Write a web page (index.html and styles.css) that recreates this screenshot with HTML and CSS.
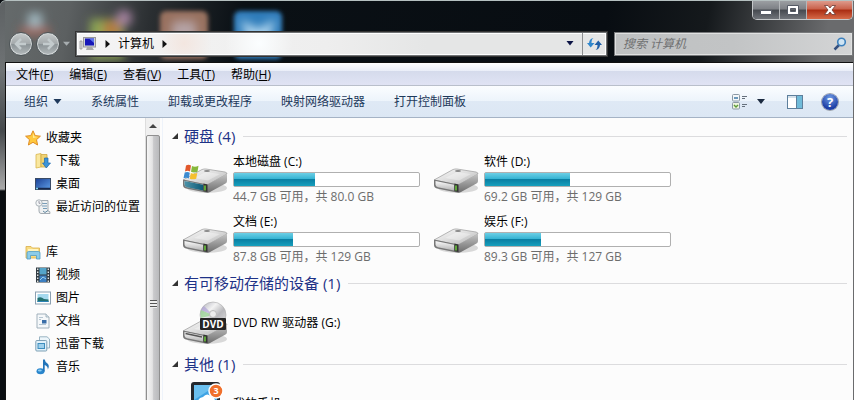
FILE: index.html
```
<!DOCTYPE html>
<html lang="zh-CN">
<head>
  <meta charset="UTF-8">
  <title>计算机</title>
  <link rel="stylesheet" href="styles.css">
</head>
<body>

<svg class="defs" aria-hidden="true">
  <defs>
    <linearGradient id="gTop" x1="0" y1="0" x2="1" y2="1">
      <stop offset="0" stop-color="#fbfbfb"/>
      <stop offset="0.5" stop-color="#dcdcdc"/>
      <stop offset="1" stop-color="#b2b2b2"/>
    </linearGradient>
    <linearGradient id="gSide" x1="0" y1="0" x2="0" y2="1">
      <stop offset="0" stop-color="#c4c4c4"/>
      <stop offset="1" stop-color="#6c6c6c"/>
    </linearGradient>
    <linearGradient id="gFront" x1="0" y1="0" x2="0" y2="1">
      <stop offset="0" stop-color="#fafafa"/>
      <stop offset="1" stop-color="#b4b4b4"/>
    </linearGradient>
    <linearGradient id="gTeal" x1="0" y1="0" x2="1" y2="0">
      <stop offset="0" stop-color="#4d93a8"/>
      <stop offset="1" stop-color="#0e5a76"/>
    </linearGradient>
    <linearGradient id="gBlue" x1="0" y1="0" x2="1" y2="1">
      <stop offset="0" stop-color="#1a3f93"/>
      <stop offset="1" stop-color="#5f9fe8"/>
    </linearGradient>
    <linearGradient id="gDisc" x1="0" y1="0" x2="1" y2="1">
      <stop offset="0" stop-color="#a9a9b4"/>
      <stop offset="0.35" stop-color="#f3f3f3"/>
      <stop offset="0.6" stop-color="#b8b8bc"/>
      <stop offset="1" stop-color="#e8e8e8"/>
    </linearGradient>
    <symbol id="drive" viewBox="0 0 46 28">
      <ellipse cx="25" cy="21" rx="20" ry="5" fill="#000" opacity="0.14"/>
      <path d="M1 13 L20 2.5 Q22 1.8 24 2 L43 5 Q45 5.5 45 7 L26 17.500 Q25 18 23 17.700 Z" fill="url(#gTop)" stroke="#999" stroke-width="0.7"/>
      <path d="M45 7 V14 Q45 15.500 43.500 16.500 L28 25 Q26.500 26 25 25.700 L25 17.800 Z" fill="url(#gSide)"/>
      <path d="M1 13 Q1 12.500 2 12.800 L25 17.500 V25.700 L4 21.500 Q1 20.500 1 18 Z" fill="#777"/>
      <path d="M2.500 14 L21 17.800 V23.500 L5 20.200 Q2.500 19.500 2.500 17.500 Z" fill="url(#gFront)"/>
      <path d="M21.500 16.500 L25.500 17.400 V25 L21.500 24.200 Z" fill="#333"/>
      <path d="M23 18.500 V23.500" stroke="#71d93c" stroke-width="1.400"/>
      <path d="M24 5 L38 7 L26 13.500 L12 11 Z" fill="#fff" opacity="0.35"/>
      <ellipse cx="25" cy="4" rx="3" ry="1" fill="#888"/>
    </symbol>
  </defs>
</svg>

<div class="window">
  <svg class="glass" viewBox="0 0 854 62" preserveAspectRatio="xMinYMin slice" aria-hidden="true">
    <filter id="soft" x="-50%" y="-50%" width="200%" height="200%"><feGaussianBlur stdDeviation="5"/></filter>
    <filter id="softer" x="-50%" y="-50%" width="200%" height="200%"><feGaussianBlur stdDeviation="2"/></filter>
    <g filter="url(#soft)">
      <rect x="28" y="12" width="14" height="14" fill="#9fb6bd"/>
      <rect x="20" y="26" width="30" height="8" fill="#a3675c"/>
      <rect x="90" y="18" width="34" height="40" fill="#8da455"/>
      <rect x="104" y="20" width="16" height="16" fill="#b4793c"/>
      <circle cx="124" cy="17" r="8" fill="#a4829f"/>
    </g>
    <g filter="url(#softer)">
      <rect x="160" y="10" width="48" height="48" rx="6" fill="#98715e"/>
    </g>
    <g filter="url(#softer)">
      <rect x="234" y="10" width="48" height="48" rx="6" fill="#2f7cba"/>
    </g>
    <g filter="url(#soft)">
      <rect x="172" y="20" width="24" height="22" rx="4" fill="#b5a3a5"/>
      <path d="M240 18 L258 28 L276 18 L268 40 H248 Z" fill="#b4d8f0"/>
    </g>
  </svg>

  <div class="caption">
    <button class="cap" aria-label="最小化"><svg width="14" height="12" viewBox="0 0 14 12"><rect x="1.500" y="6.500" width="11" height="4" rx="0.5" fill="#fff" stroke="#555b66"/></svg></button>
    <button class="cap" aria-label="最大化"><svg width="14" height="12" viewBox="0 0 14 12"><path d="M1.500 1.500 H12.500 V10.500 H1.500 Z M4.500 4.500 V7.500 H9.500 V4.500 Z" fill="#fff" fill-rule="evenodd" stroke="#555b66"/></svg></button>
    <button class="cap close" aria-label="关闭"><svg width="14" height="12" viewBox="0 0 14 12"><path d="M1.500 1.500 H5 L7 4 L9 1.500 H12.500 L9 6 L12.500 10.500 H9 L7 8 L5 10.500 H1.500 L5 6 Z" fill="#fff" stroke="#6b3a35" stroke-width="0.8"/></svg></button>
  </div>

  <div class="nav">
    <div class="travel">
      <button class="round" aria-label="后退"><svg width="14" height="14" viewBox="0 0 14 14"><path d="M7 2 L2 7 L7 12 M2.500 7 H12" fill="none" stroke="#c3cbcd" stroke-width="2.500"/></svg></button>
      <button class="round" aria-label="前进"><svg width="14" height="14" viewBox="0 0 14 14"><path d="M7 2 L12 7 L7 12 M11.500 7 H2" fill="none" stroke="#c3cbcd" stroke-width="2.500"/></svg></button>
      <button class="recent" aria-label="最近的页面"><svg width="7" height="5" viewBox="0 0 8 5"><path d="M0 0.500 H8 L4 5 Z" fill="#a7adaf"/></svg></button>
    </div>
    <div class="address">
      <svg width="18" height="16" viewBox="0 0 18 16"><path d="M1 5 H3 V13 H1 Z" fill="#ddd" stroke="#888" stroke-width="0.7"/><rect x="4.500" y="1.500" width="12" height="9.500" fill="#cfd3d8" stroke="#999"/><rect x="6" y="2.500" width="9" height="7" fill="#1717b8"/><path d="M10 2.500 H15 V7 Z" fill="#5c74ea"/><path d="M8 11 H13 L15 14 H7 Z" fill="#aaa"/></svg>
      <button class="crumb" aria-label="展开"><svg width="5" height="8" viewBox="0 0 5 8"><path d="M0.500 0 L5 4 L0.500 8 Z" fill="#111"/></svg></button>
      <button class="crumb">计算机</button>
      <button class="crumb" aria-label="子文件夹"><svg width="5" height="8" viewBox="0 0 5 8"><path d="M0.500 0 L5 4 L0.500 8 Z" fill="#111"/></svg></button>
      <button class="drop" aria-label="以前的位置"><svg width="8" height="5" viewBox="0 0 8 5"><path d="M0.500 0 H7.500 L4 4.500 Z" fill="#0c1445"/></svg></button>
      <button class="refresh" aria-label="刷新"><svg width="15" height="14" viewBox="0 0 15 14"><path d="M6.500 1 Q4.500 2 4.500 6 H7.500 L3.700 10.500 L0 6 H2 Q2.500 1.500 6.500 1 Z" fill="#2f86cc"/><path d="M8.500 13 Q10.500 12 10.500 8 H7.500 L11.300 3.500 L15 8 H13 Q12.500 12.500 8.500 13 Z" fill="#1f5fa8"/></svg></button>
    </div>
    <div class="search">
      <input type="search" placeholder="搜索 计算机" aria-label="搜索 计算机">
      <svg width="14" height="14" viewBox="0 0 14 14"><path d="M1.500 12.500 L6 8" stroke="#35507f" stroke-width="2.500"/><circle cx="8.500" cy="5" r="3.800" fill="#cfe4f3" stroke="#3d80bd" stroke-width="1.600"/></svg>
    </div>
  </div>

  <div class="client">
    <div class="menubar">
      <button>文件(<u>F</u>)</button>
      <button>编辑(<u>E</u>)</button>
      <button>查看(<u>V</u>)</button>
      <button>工具(<u>T</u>)</button>
      <button>帮助(<u>H</u>)</button>
    </div>

    <div class="toolbar">
      <button>组织<svg width="9" height="5" viewBox="0 0 9 5"><path d="M0.500 0 H8.500 L4.500 5 Z" fill="#1e395b"/></svg></button>
      <button>系统属性</button>
      <button>卸载或更改程序</button>
      <button>映射网络驱动器</button>
      <button>打开控制面板</button>
      <div class="views">
        <button aria-label="更改您的视图">
          <svg width="16" height="16" viewBox="0 0 16 16"><rect x="0.500" y="0.500" width="7" height="6.500" rx="1" fill="#f4f7f9" stroke="#8b98a5"/><path d="M2 4 H6" stroke="#3c79a6" stroke-width="1.500"/><rect x="0.500" y="8.500" width="7" height="6.500" rx="1" fill="#eef4df" stroke="#8b98a5"/><path d="M2 11 L4 13 L6 11" stroke="#5d9a37" stroke-width="1.500" fill="none"/><path d="M10 2.500 H15 M10 4.500 H13 M10 10.500 H15 M10 12.500 H13" stroke="#66707c"/></svg>
        </button>
        <button class="more" aria-label="更多选项"><svg width="8" height="5" viewBox="0 0 8 5"><path d="M0 0 H8 L4 5 Z" fill="#1b2a40"/></svg></button>
        <button class="pane" aria-label="显示预览窗格">
          <svg width="16" height="14" viewBox="0 0 16 14"><rect x="0.500" y="0.500" width="15" height="13" fill="#fff" stroke="#5d7f9c"/><path d="M1 2 H15" stroke="#aac3d6"/><rect x="10" y="1" width="5" height="12" fill="#70bbd9"/><path d="M9.500 1 V13" stroke="#5d7f9c"/></svg>
        </button>
        <button class="help" aria-label="帮助">?</button>
      </div>
    </div>

    <div class="content">
      <nav class="sidebar">
        <div class="tree">
          <a class="root" href="#"><svg width="16" height="16" viewBox="0 0 16 16"><path d="M8 0.800 L10.200 5.600 L15.400 6.200 L11.500 9.700 L12.600 15 L8 12.300 L3.400 15 L4.500 9.700 L0.600 6.200 L5.800 5.600 Z" fill="#ffc83d" stroke="#df8d25"/><path d="M8 3 L9.200 6.500 L12.500 7 L8 8 Z" fill="#ffec9a"/></svg>收藏夹</a>
          <a href="#"><svg width="16" height="16" viewBox="0 0 16 16"><path d="M1 1.500 L6 0.500 V14 L1 15 Z" fill="#f9e79f" stroke="#d9b64c" stroke-width="0.8"/><path d="M6 1.500 H12 V14 H6 Z" fill="#f0d374" stroke="#d0aa42" stroke-width="0.8"/><path d="M9.500 5 H13 V10 H15.500 L11.300 15 L7.500 10 H9.500 Z" fill="#3b94d9" stroke="#1e69ae" stroke-width="0.7"/></svg>下载</a>
          <a href="#"><svg width="16" height="16" viewBox="0 0 16 16"><rect x="0.500" y="2.500" width="15" height="11" fill="url(#gBlue)" stroke="#3a4b66"/><path d="M1 12.500 H15" stroke="#17284b" stroke-width="1.500"/><path d="M1 12.500 H3" stroke="#7fd1ea" stroke-width="1.500"/></svg>桌面</a>
          <a href="#"><svg width="16" height="16" viewBox="0 0 16 16"><path d="M4 1.500 H13 V12 Q15.500 12 15 14.500 H6 Q4 14.500 4 12 Z" fill="#eef0f1" stroke="#8e989f" stroke-width="0.8"/><path d="M7 4.500 H12 M7 7 H12 M8 9.500 H12" stroke="#789db8"/><path d="M8 12 L10 13.500 L13 11.500" fill="none" stroke="#648aa2"/><circle cx="4" cy="4" r="3.200" fill="#f4f6f7" stroke="#9aa5ab" stroke-width="0.8"/><path d="M4 2 V4.300 H5.500" fill="none" stroke="#778" stroke-width="0.7"/></svg>最近访问的位置</a>
        </div>
        <div class="tree">
          <a class="root" href="#"><svg width="16" height="16" viewBox="0 0 16 16"><path d="M1 14 V2.500 H6 L7.500 4 H14.500 V14 Z" fill="#f8dc83" stroke="#d9ad48" stroke-width="0.8"/><path d="M3 5 H13 V8 H3 Z" fill="#fff4bf"/><path d="M2 15 V9 Q2 7.500 3.500 7.500 H13.500 Q15 7.500 15 9 V15 H11.500 V11.500 H5.500 V15 Z" fill="#8bcce9" stroke="#4f9cc4" stroke-width="0.8"/></svg>库</a>
          <a href="#"><svg width="16" height="16" viewBox="0 0 16 16"><rect x="1" y="0.500" width="14" height="15" fill="#333c42"/><rect x="4.500" y="1" width="7" height="6.500" fill="#55a5ca"/><rect x="4.500" y="8.500" width="7" height="6.500" fill="#3c7fc1"/><path d="M5 13 L8 10 L11 12" stroke="#9bd3ed" fill="none"/><path d="M2.700 1.500 V15 M13.300 1.500 V15" stroke="#e1e5e7" stroke-width="1.400" stroke-dasharray="1.500 1.500"/></svg>视频</a>
          <a href="#"><svg width="16" height="16" viewBox="0 0 16 16"><rect x="0.500" y="2" width="15" height="12" fill="#fff" stroke="#8ba0b1"/><rect x="2.500" y="4" width="11" height="8" fill="#a6d9ee"/><path d="M2.500 8 Q6 6 9 9 L13.500 9.500 V12 H2.500 Z" fill="#23706f"/><path d="M2.500 11 H13.500 V12 H2.500 Z" fill="#2b83b5"/></svg>图片</a>
          <a href="#"><svg width="16" height="16" viewBox="0 0 16 16"><path d="M2 1 H11 L14 4 V15 H2 Z" fill="#f5f8fa" stroke="#98a9b5" stroke-width="0.9"/><path d="M11 1 V4 H14" fill="#d9e4eb" stroke="#98a9b5" stroke-width="0.8"/><path d="M4 4.500 H8 M4 6.500 H6 M4 11.500 H11" stroke="#b5c6d2"/><rect x="7" y="7" width="4.500" height="3.500" fill="#3b6ea8"/></svg>文档</a>
          <a href="#"><svg width="16" height="16" viewBox="0 0 16 16"><path d="M4.500 0.800 H12 L14.500 3 V12 H4.500 Z" fill="#edf6fb" stroke="#8fabbc" stroke-width="0.9"/><rect x="0.800" y="4.500" width="11" height="10.500" rx="1" fill="#e1f1fa" stroke="#7397ae" stroke-width="0.9"/><rect x="3" y="7.500" width="6.500" height="5" fill="#9ed0ec" stroke="#3e8dbd"/></svg>迅雷下载</a>
          <a href="#"><svg width="16" height="16" viewBox="0 0 16 16"><ellipse cx="5.500" cy="12.300" rx="4" ry="3" fill="#2a86cd"/><path d="M8 12 V0.500 H9.800 Q10 3 12.500 4.500 Q15 6.500 12.800 10.500 Q13 7 9.700 6 V12.500 Z" fill="#2375ba"/><ellipse cx="4.800" cy="11.500" rx="2" ry="1" fill="#8ccdf2"/></svg>音乐</a>
        </div>
      </nav>
      <div class="scrollbar" aria-hidden="true">
        <div class="up"></div>
        <div class="thumb"><span class="grip"></span></div>
      </div>

      <main class="files">
        <section>
          <h2>硬盘 (4)</h2>
          <div class="items">
            <div class="item">
              <div class="icon">
                <svg width="46" height="28"><use href="#drive"/></svg>
                <svg class="over" width="46" height="32" viewBox="0 0 46 32"><path d="M2.500 18 L21 21.800 V27.500 L5 24.200 Q2.500 23.500 2.500 21.500 Z" fill="url(#gTeal)"/><path d="M4 2.500 Q6.500 1 9 2.500 L8 8.500 Q5.500 7 3 8.500 Z" fill="#e2582c"/><path d="M10 3 Q13 4.500 16.500 2.800 L15.500 8.700 Q12 10 9 8.800 Z" fill="#86b83b"/><path d="M2.700 9.500 Q5.500 8.300 7.800 9.800 L6.800 15.500 Q4.300 14 1.500 15.300 Z" fill="#3c8bd0"/><path d="M8.800 10.100 Q11.500 11.500 15.300 10 L14.200 15.700 Q10.500 17 7.800 15.700 Z" fill="#f5c02e"/></svg>
              </div>
              <div class="info">
                <span class="name">本地磁盘 (C:)</span>
                <div class="bar"><div class="fill" style="width: 44%"></div></div>
                <span class="space">44.7 GB 可用，共 80.0 GB</span>
              </div>
            </div>
            <div class="item">
              <div class="icon"><svg width="46" height="28"><use href="#drive"/></svg></div>
              <div class="info">
                <span class="name">软件 (D:)</span>
                <div class="bar"><div class="fill" style="width: 46%"></div></div>
                <span class="space">69.2 GB 可用，共 129 GB</span>
              </div>
            </div>
            <div class="item">
              <div class="icon"><svg width="46" height="28"><use href="#drive"/></svg></div>
              <div class="info">
                <span class="name">文档 (E:)</span>
                <div class="bar"><div class="fill" style="width: 32%"></div></div>
                <span class="space">87.8 GB 可用，共 129 GB</span>
              </div>
            </div>
            <div class="item">
              <div class="icon"><svg width="46" height="28"><use href="#drive"/></svg></div>
              <div class="info">
                <span class="name">娱乐 (F:)</span>
                <div class="bar"><div class="fill" style="width: 30%"></div></div>
                <span class="space">89.3 GB 可用，共 127 GB</span>
              </div>
            </div>
          </div>
        </section>

        <section>
          <h2>有可移动存储的设备 (1)</h2>
          <div class="items">
            <div class="item single">
              <svg width="46" height="44" viewBox="0 0 46 44">
                <use href="#drive" y="17" width="46" height="28"/>
                <path d="M3.500 32.500 L20 36" stroke="#555" stroke-width="1.500"/>
                <circle cx="31" cy="14" r="13" fill="url(#gDisc)" stroke="#aaa" stroke-width="0.6"/>
                <path d="M31 14 L19 9 Q17.500 13 19 17 Z" fill="#8fd08a" opacity="0.7"/>
                <path d="M31 14 L22 5 Q20 6.500 19 9 Z" fill="#a89ad6" opacity="0.6"/>
                <circle cx="31" cy="13" r="3.500" fill="#eee" stroke="#bbb"/>
                <rect x="18" y="17" width="26" height="12" rx="1" fill="#252525"/>
                <text class="dvd" x="31" y="27" text-anchor="middle">DVD</text>
              </svg>
              <span class="name">DVD RW 驱动器 (G:)</span>
            </div>
          </div>
        </section>

        <section>
          <h2>其他 (1)</h2>
          <div class="items">
            <div class="item single">
              <svg width="46" height="44" viewBox="0 0 46 44">
                <rect x="9" y="0" width="29" height="43" rx="3" fill="#24282e"/>
                <rect x="12" y="3" width="23" height="35" fill="#3ea3e4"/>
                <path d="M12 3 H35 L12 18 Z" fill="#6bc0f0"/>
                <path d="M16 22 Q15 16 21 15 Q25 10 30 15 Q34 16 33 22 Z" fill="#fff"/>
                <circle cx="34" cy="9" r="7" fill="#f0702c" stroke="#fff" stroke-width="1.500"/>
                <text class="count" x="34" y="12" text-anchor="middle">3</text>
              </svg>
              <span class="name">我的手机</span>
            </div>
          </div>
        </section>
      </main>
    </div>
  </div>
</div>

</body>
</html>
```
FILE: styles.css
```
* {
  box-sizing: border-box;
}

body {
  margin: 0;
  overflow: hidden;
  background: #0a0d11;
  color: #000;
  font-family: "Open Sans", "Noto Sans CJK SC", sans-serif;
  font-size: 12px;
  line-height: 16px;
}

button {
  padding: 0;
  border: 0;
  background: none;
  color: inherit;
  font: inherit;
  white-space: nowrap;
}

svg {
  display: block;
  flex-shrink: 0;
}

a {
  color: inherit;
  text-decoration: none;
}

.defs {
  position: absolute;
  width: 0;
  height: 0;
}

/* window frame */
.window {
  position: relative;
  display: flex;
  flex-direction: column;
  height: 100vh;
  padding: 0 1px 0 5px;
  border-top: 1px solid #b5c0c0;
  border-radius: 6px 0 0 0;
  background:
    linear-gradient(#5d6163, #6f7375 70px, #45494c 130px, #aaa 188px, #0a0d11 190px) left / 5px 100% no-repeat,
    linear-gradient(100deg, #666b6c, #5c6061 70px, #2b2f32 150px, #0a1015 240px, #080d12 600px, #15191c 700px, #6a6b6d 820px);
}

.glass {
  position: absolute;
  top: 0;
  left: 0;
  width: 100%;
  height: 62px;
}

.caption {
  position: relative;
  display: flex;
  align-self: flex-end;
  height: 19px;
  border: 1px solid #c5c8ca;
  border-top: 0;
  border-radius: 0 0 5px 5px;
  overflow: hidden;
}

.cap {
  display: flex;
  align-items: center;
  justify-content: center;
  width: 27px;
  border-right: 1px solid #b4b7ba;
  background: linear-gradient(#9b9ea2, #7d8085 45%, #45494f 50%, #70747a);
}

.cap.close {
  width: 45px;
  border-right: 0;
  background: linear-gradient(#dd9a8c, #c9604a 45%, #a92c12 50%, #d66a48);
}

.nav {
  position: relative;
  display: flex;
  align-items: center;
  gap: 7px;
  height: 42px;
  padding-top: 5px;
}

.travel {
  display: flex;
  align-items: center;
  gap: 3px;
  width: 64px;
  padding-left: 4px;
}

.round {
  display: flex;
  align-items: center;
  justify-content: center;
  flex-shrink: 0;
  width: 24px;
  height: 24px;
  border: 1px solid #4e5558;
  border-radius: 50%;
  background: linear-gradient(#c7cbcc, #a2a8aa 50%, #8b9396 52%, #b4babc);
  box-shadow: inset 0 0 0 1px #d2d6d7;
}

.address {
  display: flex;
  align-items: center;
  flex: 1;
  gap: 8px;
  height: 24px;
  padding-left: 2px;
  border: 1px solid #6f7274;
  outline: 1px solid #333;
  background:
    radial-gradient(circle at 107px 10px, #f3e6e0, transparent 28px),
    radial-gradient(circle at 182px 10px, #fbfeff, transparent 34px),
    linear-gradient(90deg, #f4f4f4, #eee 250px, #e5e6e6 350px);
  box-shadow: inset 0 0 0 1px #fff;
}

.drop {
  margin-left: auto;
}

.refresh {
  display: flex;
  align-items: center;
  justify-content: center;
  align-self: stretch;
  width: 24px;
  border-left: 1px solid #8c8e90;
}

.search {
  display: flex;
  align-items: center;
  width: 239px;
  height: 24px;
  padding: 0 5px 0 8px;
  border: 1px solid #77797b;
  background: linear-gradient(90deg, #bfc1c2, #c2c4c5 50%, #d4d5d6);
  box-shadow: inset 0 0 0 1px #e0e1e1;
}

.search input {
  flex: 1;
  min-width: 0;
  padding: 0;
  border: 0;
  outline: 0;
  background: none;
  font: inherit;
  font-style: italic;
}

.search input::placeholder {
  color: #707172;
}

.client {
  position: relative;
  display: flex;
  flex-direction: column;
  flex: 1;
  min-height: 0;
  border-top: 1px solid #111;
  border-left: 1px solid #111;
  background: #fcfcfc;
}

.menubar {
  display: flex;
  gap: 16px;
  height: 23px;
  padding: 1px 10px 0;
  border-bottom: 1px solid #b9bfcb;
  background: linear-gradient(#fff, #eaeef8 35%, #d5dbec 37%, #e0e3f4);
}

.toolbar {
  display: flex;
  align-items: center;
  gap: 29px;
  height: 32px;
  padding: 0 15px 0 18px;
  border-bottom: 1px solid #a5b3c5;
  background: linear-gradient(#fbfdff, #edf4fb 48%, #dfe9f5 50%, #dce7f4);
  color: #1e395b;
}

.toolbar > button {
  display: flex;
  align-items: center;
  gap: 5px;
}

.views {
  display: flex;
  align-items: center;
  margin-left: auto;
}

.more {
  padding: 0 22px 0 9px;
}

.help {
  width: 16px;
  height: 16px;
  margin-left: 19px;
  border-radius: 50%;
  background: radial-gradient(circle at 50% 25%, #6f9be4, #1e3fa6 70%);
  box-shadow: 0 0 0 1px #9aa0ab;
  color: #fff;
  font-size: 13px;
  font-weight: bold;
}

.content {
  display: flex;
  flex: 1;
  min-height: 0;
}

/* navigation pane */
.sidebar {
  width: 139px;
  padding-top: 8px;
  overflow: hidden;
}

.sidebar::after {
  content: "";
  display: block;
  height: 10px;
  margin: 0 2px;
  background: #e6e6e6;
}

.tree {
  margin-bottom: 22px;
}

.tree a {
  display: flex;
  align-items: center;
  gap: 5px;
  height: 23px;
  padding-left: 29px;
  white-space: nowrap;
}

.tree .root {
  padding-left: 19px;
}

.scrollbar {
  display: flex;
  flex-direction: column;
  width: 15px;
  border-left: 1px solid #ddd;
  background: #f0f0f0;
}

.up {
  align-self: center;
  margin: 6px 0 7px;
  border: 4px solid transparent;
  border-top: 0;
  border-bottom: 4px solid #444;
}

.thumb {
  display: flex;
  align-items: center;
  justify-content: center;
  flex: 1;
  margin-bottom: -72px;
  border: 1px solid #8f8f8f;
  border-radius: 2px;
  background: linear-gradient(90deg, #f6f6f6, #e3e3e3 45%, #c9c9cb 55%, #b9babc);
}

.grip {
  width: 7px;
  height: 8px;
  background: repeating-linear-gradient(#555 0 1px, #eee 1px 3px);
}

/* drives and devices */
.files {
  flex: 1;
  min-width: 0;
  margin-left: 2px;
  padding: 8px 6px 0 9px;
  border-left: 1px solid #eef3fa;
  overflow: hidden;
}

h2 {
  display: flex;
  align-items: center;
  gap: 8px;
  height: 20px;
  margin: 0;
  color: #1e3287;
  font-size: 15px;
  font-weight: normal;
  line-height: 20px;
}

h2::before {
  content: "";
  width: 6px;
  height: 6px;
  margin-right: -2px;
  background: #333;
  clip-path: polygon(100% 0, 100% 100%, 0 100%);
}

h2::after {
  content: "";
  flex: 1;
  height: 1px;
  background: #dcdcde;
}

.items {
  display: grid;
  grid-template-columns: repeat(auto-fill, 251px);
  row-gap: 10px;
  padding: 8px 0 9px 10px;
}

.item {
  display: flex;
  align-items: center;
  gap: 5px;
  height: 50px;
}

.single {
  height: 44px;
}

.icon {
  position: relative;
  padding-top: 4px;
}

.over {
  position: absolute;
  top: 0;
  left: 0;
}

.info {
  display: flex;
  flex-direction: column;
  width: 187px;
}

.bar {
  height: 15px;
  margin: 2px 0;
  border: 1px solid #b0b0b0;
  border-radius: 2px;
  background: #fff;
}

.fill {
  height: 100%;
  background: linear-gradient(#6ccfe6, #35b3d2 45%, #0a7fa3 50%, #17a0bd);
}

.space {
  color: #6d6d6d;
  white-space: nowrap;
}

.dvd {
  fill: #fff;
  font-size: 10px;
  font-weight: bold;
}

.count {
  fill: #fff;
  font-size: 9px;
  font-weight: bold;
}
```
